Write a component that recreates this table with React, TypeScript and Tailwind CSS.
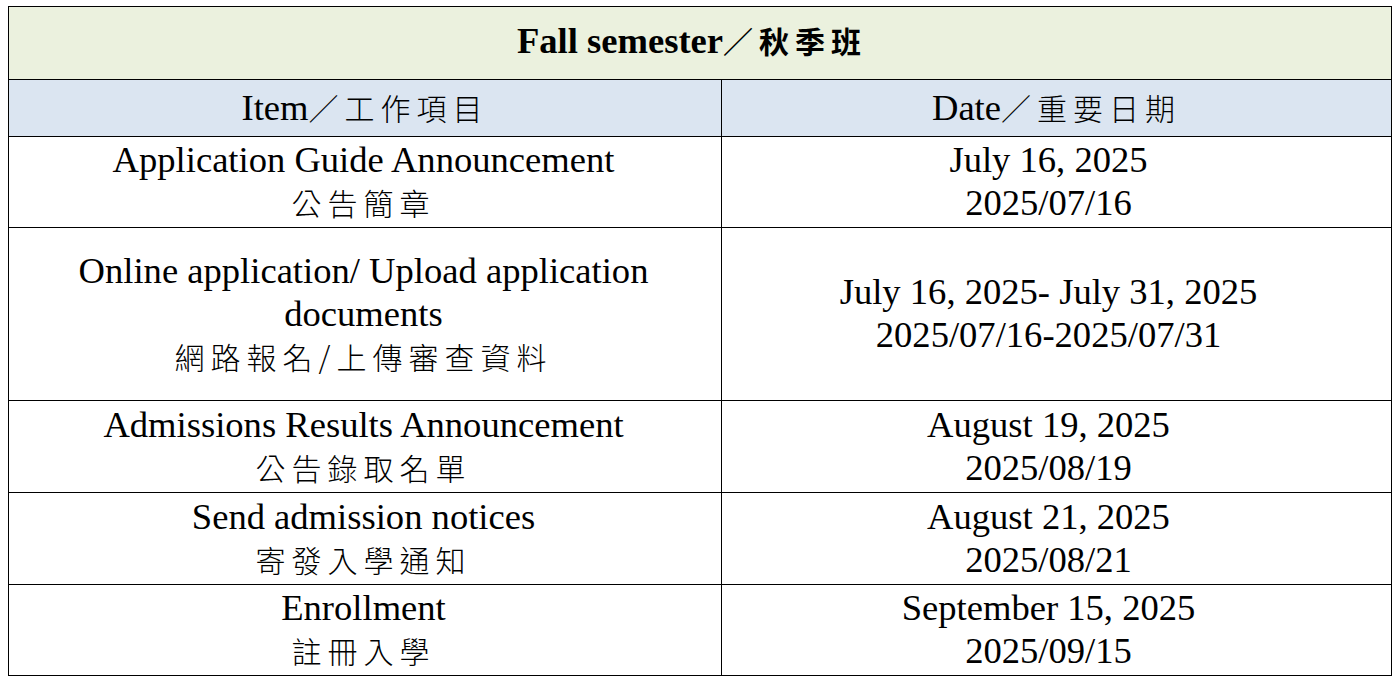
import React from "react";

const serif = { fontFamily: '"Liberation Serif", "Noto Sans CJK TC", serif' };

function Cjk({ children, bold = false }: { children: React.ReactNode; bold?: boolean }) {
  return (
    <span
      className={`text-[30px] tracking-[6px] ${bold ? "font-bold" : "font-light"}`}
      style={{ fontFamily: '"Noto Sans CJK TC", "Liberation Serif", sans-serif' }}
    >
      {children}
    </span>
  );
}

type Row = { h: string; item: React.ReactNode[]; date: string[] };

const rows: Row[] = [
  {
    h: "h-[90px]",
    item: ["Application Guide Announcement", <Cjk key="c">公告簡章</Cjk>],
    date: ["July 16, 2025", "2025/07/16"],
  },
  {
    h: "h-[172px]",
    item: [
      "Online application/ Upload application",
      "documents",
      <Cjk key="c">網路報名/上傳審查資料</Cjk>,
    ],
    date: ["July 16, 2025- July 31, 2025", "2025/07/16-2025/07/31"],
  },
  {
    h: "h-[91px]",
    item: ["Admissions Results Announcement", <Cjk key="c">公告錄取名單</Cjk>],
    date: ["August 19, 2025", "2025/08/19"],
  },
  {
    h: "h-[91px]",
    item: ["Send admission notices", <Cjk key="c">寄發入學通知</Cjk>],
    date: ["August 21, 2025", "2025/08/21"],
  },
  {
    h: "h-[90px]",
    item: ["Enrollment", <Cjk key="c">註冊入學</Cjk>],
    date: ["September 15, 2025", "2025/09/15"],
  },
];

function Cell({ lines, h, extra = "" }: { lines: React.ReactNode[]; h: string; extra?: string }) {
  return (
    <div className={`bg-white ${h} ${extra} pb-[2px] flex flex-col items-center justify-center`}>
      {lines.map((l, i) => (
        <div key={i} className="text-[36.6px] leading-[43px] text-black whitespace-nowrap">
          {l}
        </div>
      ))}
    </div>
  );
}

export default function App() {
  return (
    <div className="w-[1400px] h-[681px] bg-white pt-[6px] pl-[8px]" style={serif}>
      <div className="grid grid-cols-[712px_669px] gap-[1px] bg-black p-[1px] w-max">
        <div className="col-span-2 h-[72px] bg-[#EBF1DE] flex items-center justify-center pb-[6px] pr-[16px]">
          <span className="text-[36.6px] font-bold leading-[43px] text-black">
            Fall semester<Cjk bold>／秋季班</Cjk>
          </span>
        </div>
        <div className="h-[56px] bg-[#DBE5F1] flex items-center justify-center pb-[2px]">
          <span className="text-[36.6px] leading-[43px] text-black">
            Item<Cjk>／工作項目</Cjk>
          </span>
        </div>
        <div className="h-[56px] bg-[#DBE5F1] flex items-center justify-center pb-[2px]">
          <span className="text-[36.6px] leading-[43px] text-black">
            Date<Cjk>／重要日期</Cjk>
          </span>
        </div>
        {rows.map((r, i) => (
          <React.Fragment key={i}>
            <Cell lines={r.item} h={r.h} extra="pr-[3px]" />
            <Cell lines={r.date} h={r.h} extra="pr-[16px]" />
          </React.Fragment>
        ))}
      </div>
    </div>
  );
}
